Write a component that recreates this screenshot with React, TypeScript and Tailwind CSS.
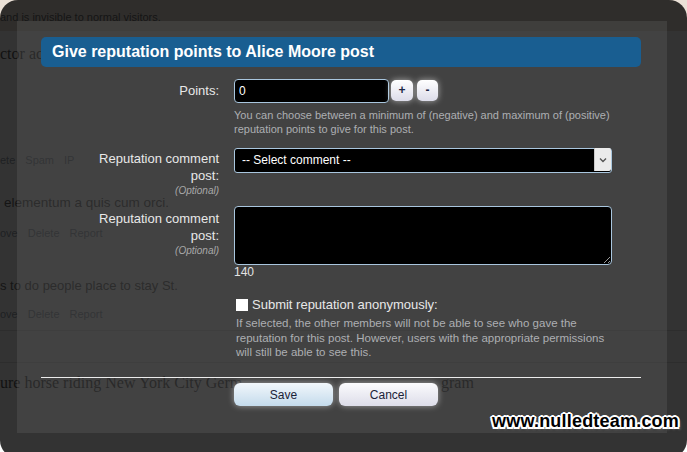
const BackgroundPage = () => {
  return (
    <div className="flex w-full flex-col bg-white font-['Liberation_Sans',Arial,sans-serif] text-[#6c6c6c]">
      <div className="h-[31px] bg-[#ebe1d7] pt-[10px] text-[11px] leading-[14px] whitespace-nowrap">
        and is invisible to normal visitors.
      </div>
      <div className="font-['Liberation_Serif',serif] text-[16px] leading-[46px] whitespace-nowrap text-[#5a5a5a]">
        ctor ac
      </div>
      <div className="mt-[73px] flex gap-[10px] text-[11px] leading-[20px] whitespace-nowrap text-[#9aa3ae]">
        <span>ete</span>
        <span>Spam</span>
        <span>IP</span>
      </div>
      <div className="mt-[23px] pl-[4px] text-[13.5px] leading-[20px] whitespace-nowrap">
        elementum a quis cum orci.
      </div>
      <div className="mt-[10px] flex gap-[10px] text-[11px] leading-[20px] whitespace-nowrap text-[#9aa3ae]">
        <span>ove</span>
        <span>Delete</span>
        <span>Report</span>
      </div>
      <div className="mt-[33px] text-[13px] leading-[20px] whitespace-nowrap">
        s to do people place to stay St.
      </div>
      <div className="mt-[8px] flex gap-[10px] text-[11px] leading-[20px] whitespace-nowrap text-[#9aa3ae]">
        <span>ove</span>
        <span>Delete</span>
        <span>Report</span>
      </div>
      <div className="mt-[6px] h-px bg-[#e2e2e2]" />
      <div className="mt-[31px] h-px bg-[#e2e2e2]" />
      <div className="mt-[10px] flex font-['Liberation_Serif',serif] text-[16px] leading-[20px] whitespace-nowrap text-[#5a5a5a]">
        <span className="w-[441px] shrink-0">ure horse riding New York City Germ</span>
        <span>gram</span>
      </div>
      <div className="h-[80px]" />
    </div>
  );
};

const Label = ({ pt }: { pt: string }) => (
  <div className={`w-[178px] shrink-0 text-right ${pt}`}>
    <div className="text-[13px] leading-[17px] text-[#e8e8e8]">Reputation comment</div>
    <div className="text-[13px] leading-[17px] text-[#e8e8e8]">post:</div>
    <div className="text-[10px] leading-[13px] italic text-[#a9a9a9]">(Optional)</div>
  </div>
);

const ReputationDialog = () => {
  return (
    <div className="absolute left-0 top-0 h-[458px] w-[687px] rounded-[18px] border-solid border-t-[21px] border-r-[20px] border-b-[25px] border-l-[17px] border-[rgba(0,0,0,0.8)] bg-[rgba(33,33,33,0.85)] bg-clip-padding font-['Liberation_Sans',Arial,sans-serif]">
      <div className="flex flex-col pt-[16px] pr-[26px] pl-[24px]">
        <div className="h-[30px] rounded-[5px] bg-[#195e91] pl-[11px] text-[16px] leading-[30px] font-bold text-white">
          Give reputation points to Alice Moore post
        </div>

        {/* points */}
        <div className="mt-[12px] flex">
          <div className="w-[178px] shrink-0 text-right text-[13px] leading-[24px] text-[#e8e8e8]">Points:</div>
          <div className="ml-[15px] w-[378px]">
            <div className="flex items-start">
              <input
                readOnly
                value="0"
                className="h-[24px] w-[155px] rounded-[4px] border border-[#a9c6de] bg-black pl-[4px] text-[12px] text-white outline-none"
              />
              <button className="mt-[1px] ml-[2px] h-[21px] w-[22px] rounded-[5px] bg-linear-to-b from-[#ffffff] to-[#dcdce9] text-[12px] font-bold leading-[21px] text-[#1c2745] shadow-[0_0_6px_rgba(255,255,255,0.55)]">
                +
              </button>
              <button className="mt-[1px] ml-[4px] h-[21px] w-[21px] rounded-[5px] bg-linear-to-b from-[#ffffff] to-[#dcdce9] text-[12px] font-bold leading-[21px] text-[#1c2745] shadow-[0_0_6px_rgba(255,255,255,0.55)]">
                -
              </button>
            </div>
            <div className="mt-[5px] text-[11px] leading-[14px] whitespace-nowrap text-[#adafb2]">
              You can choose between a minimum of (negative) and maximum of (positive)
              <br />
              reputation points to give for this post.
            </div>
          </div>
        </div>

        {/* comment select */}
        <div className="mt-[11px] flex">
          <Label pt="pt-[3px]" />
          <div className="ml-[15px] w-[378px]">
            <div className="relative h-[25px] w-full">
              <select className="h-full w-full appearance-none rounded-[3px] border border-[#a9c6de] bg-black pl-[7px] text-[12px] text-white outline-none">
                <option>-- Select comment --</option>
              </select>
              <div className="pointer-events-none absolute top-[1px] right-[1px] bottom-[1px] flex w-[17px] items-center justify-center rounded-r-[2px] border-l border-[#c9c9c9] bg-[#ebebeb]">
                <svg width="8" height="6" viewBox="0 0 8 6">
                  <path d="M1 1.5 L4 4.5 L7 1.5" fill="none" stroke="#555" strokeWidth="1.4" />
                </svg>
              </div>
            </div>
          </div>
        </div>

        {/* comment text */}
        <div className="mt-[9px] flex">
          <Label pt="pt-[4px]" />
          <div className="ml-[15px] w-[378px]">
            <textarea className="block h-[59px] w-full rounded-[4px] border border-[#a9c6de] bg-black text-[12px] text-white outline-none" />
            <div className="text-[12px] leading-[14px] text-[#e4e4e4]">140</div>
          </div>
        </div>

        {/* anonymous */}
        <div className="mt-[18px] ml-[195px] w-[378px]">
          <div className="flex h-[15px] items-center">
            <span className="h-[12px] w-[12px] bg-white" />
            <span className="ml-[4px] text-[13px] leading-[15px] text-[#e8e8e8]">Submit reputation anonymously:</span>
          </div>
          <div className="mt-[4px] text-[11.5px] leading-[14.5px] whitespace-nowrap text-[#adafb2]">
            If selected, the other members will not be able to see who gave the
            <br />
            reputation for this post. However, users with the appropriate permissions
            <br />
            will still be able to see this.
          </div>
        </div>

        <div className="mt-[17px] h-[1.5px] bg-[#ececec]" />

        <div className="mt-[5px] ml-[193px] flex gap-[6px]">
          <button className="h-[23px] w-[99px] rounded-[6px] bg-linear-to-b from-[#f2f7fb] to-[#c4dbec] text-[12px] text-[#1b2338] shadow-[0_0_6px_rgba(255,255,255,0.5)]">
            Save
          </button>
          <button className="h-[23px] w-[99px] rounded-[6px] bg-linear-to-b from-[#fbfbfd] to-[#dddde9] text-[12px] text-[#1b2338] shadow-[0_0_6px_rgba(255,255,255,0.5)]">
            Cancel
          </button>
        </div>
      </div>
    </div>
  );
};

export default function App() {
  return (
    <div className="relative h-[452px] w-[687px] overflow-hidden bg-white">
      <BackgroundPage />
      <ReputationDialog />
      <div className="absolute top-[409px] right-[8px] font-['Liberation_Sans',Arial,sans-serif] text-[18px] leading-[24px] font-black tracking-[0.2px] text-black [text-shadow:2px_0_0_#fff,-2px_0_0_#fff,0_2px_0_#fff,0_-2px_0_#fff,1.5px_1.5px_0_#fff,-1.5px_1.5px_0_#fff,1.5px_-1.5px_0_#fff,-1.5px_-1.5px_0_#fff,3px_3px_2px_#555]">
        www.nulledteam.com
      </div>
    </div>
  );
}
